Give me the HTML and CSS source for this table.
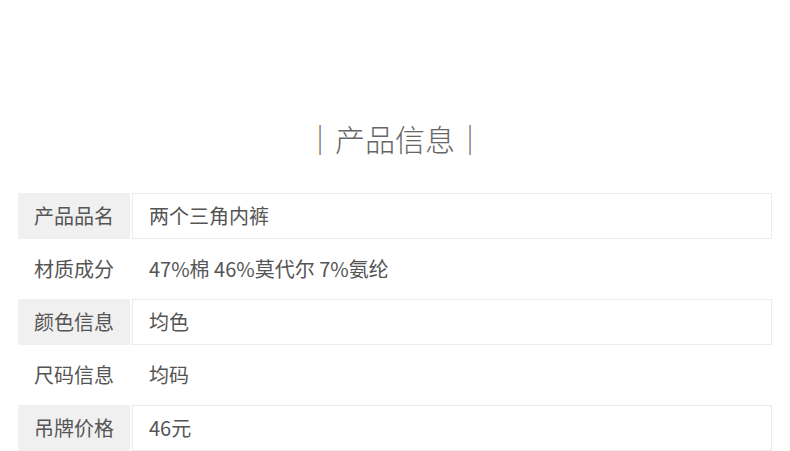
FILE: index.html
```html
<!DOCTYPE html>
<html>
<head>
    <meta charset="utf-8">
    <title>产品信息</title>
    <link rel="stylesheet" href="styles.css">
</head>
<body>
    <div class="info-container">
        <h2 class="info-title">｜产品信息｜</h2>
        <div class="info-table">
            <div class="info-row shaded">
                <div class="info-label">产品品名</div>
                <div class="info-value">两个三角内裤</div>
            </div>
            <div class="info-row">
                <div class="info-label">材质成分</div>
                <div class="info-value">47%棉 46%莫代尔 7%氨纶</div>
            </div>
            <div class="info-row shaded">
                <div class="info-label">颜色信息</div>
                <div class="info-value">均色</div>
            </div>
            <div class="info-row">
                <div class="info-label">尺码信息</div>
                <div class="info-value">均码</div>
            </div>
            <div class="info-row shaded">
                <div class="info-label">吊牌价格</div>
                <div class="info-value">46元</div>
            </div>
        </div>
    </div>
</body>
</html>
```
FILE: styles.css
```css
body {
    font-family: "Noto Sans CJK SC", "Noto Sans", sans-serif;
    background-color: #ffffff;
    margin: 0;
    color: #555555;
}
.info-container {
    padding: 116px 18px 0 18px;
}
.info-title {
    margin: 0 0 32px 0;
    font-size: 30px;
    line-height: 45px;
    font-weight: 300;
    color: #666666;
    text-align: center;
}
.info-table {
    display: flex;
    flex-direction: column;
    gap: 7px;
}
.info-row {
    display: flex;
    gap: 2px;
    height: 46px;
    font-size: 20px;
}
.info-label {
    width: 112px;
    display: flex;
    align-items: center;
    justify-content: center;
    padding-bottom: 2px;
    box-sizing: border-box;
}
.info-value {
    flex: 1;
    display: flex;
    align-items: center;
    padding: 0 0 2px 16px;
    border: 1px solid transparent;
}
.shaded .info-label {
    background-color: #f0f0f0;
}
.shaded .info-value {
    border-color: #ebebeb;
}
```
